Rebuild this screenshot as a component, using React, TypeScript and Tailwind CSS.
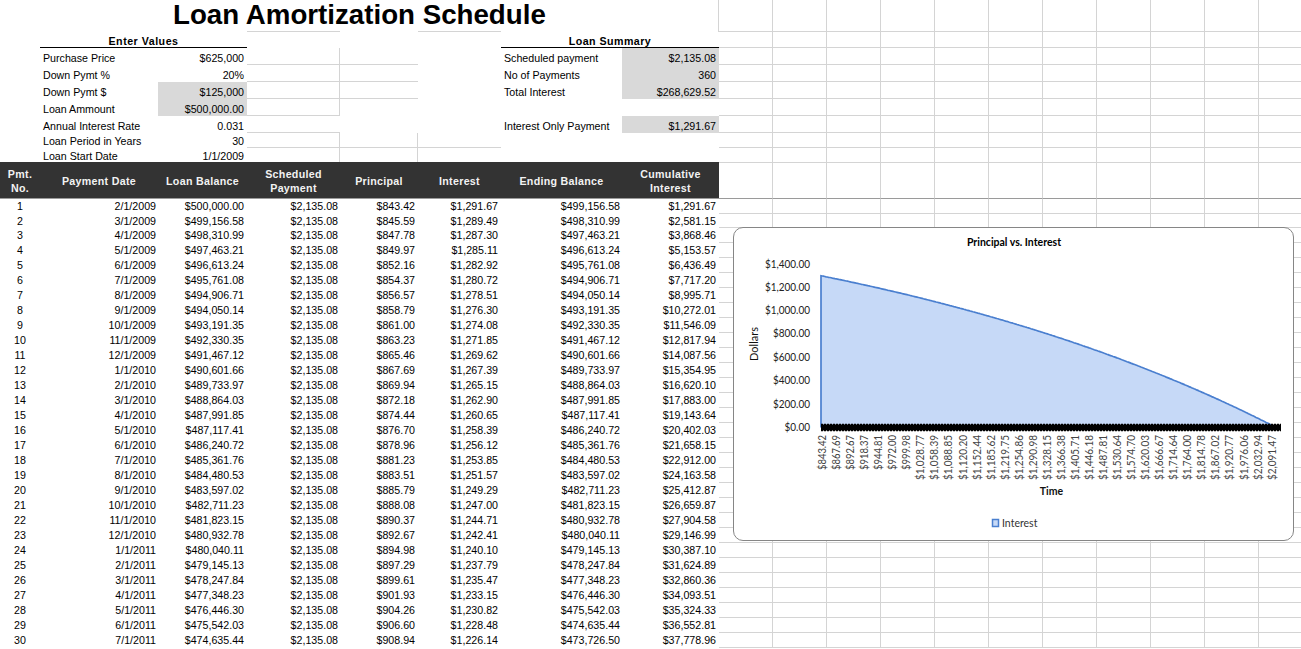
import type { ReactNode } from 'react'

const ROWS = [
  ['1', '2/1/2009', '$500,000.00', '$843.42', '$1,291.67', '$499,156.58', '$1,291.67'],
  ['2', '3/1/2009', '$499,156.58', '$845.59', '$1,289.49', '$498,310.99', '$2,581.15'],
  ['3', '4/1/2009', '$498,310.99', '$847.78', '$1,287.30', '$497,463.21', '$3,868.46'],
  ['4', '5/1/2009', '$497,463.21', '$849.97', '$1,285.11', '$496,613.24', '$5,153.57'],
  ['5', '6/1/2009', '$496,613.24', '$852.16', '$1,282.92', '$495,761.08', '$6,436.49'],
  ['6', '7/1/2009', '$495,761.08', '$854.37', '$1,280.72', '$494,906.71', '$7,717.20'],
  ['7', '8/1/2009', '$494,906.71', '$856.57', '$1,278.51', '$494,050.14', '$8,995.71'],
  ['8', '9/1/2009', '$494,050.14', '$858.79', '$1,276.30', '$493,191.35', '$10,272.01'],
  ['9', '10/1/2009', '$493,191.35', '$861.00', '$1,274.08', '$492,330.35', '$11,546.09'],
  ['10', '11/1/2009', '$492,330.35', '$863.23', '$1,271.85', '$491,467.12', '$12,817.94'],
  ['11', '12/1/2009', '$491,467.12', '$865.46', '$1,269.62', '$490,601.66', '$14,087.56'],
  ['12', '1/1/2010', '$490,601.66', '$867.69', '$1,267.39', '$489,733.97', '$15,354.95'],
  ['13', '2/1/2010', '$489,733.97', '$869.94', '$1,265.15', '$488,864.03', '$16,620.10'],
  ['14', '3/1/2010', '$488,864.03', '$872.18', '$1,262.90', '$487,991.85', '$17,883.00'],
  ['15', '4/1/2010', '$487,991.85', '$874.44', '$1,260.65', '$487,117.41', '$19,143.64'],
  ['16', '5/1/2010', '$487,117.41', '$876.70', '$1,258.39', '$486,240.72', '$20,402.03'],
  ['17', '6/1/2010', '$486,240.72', '$878.96', '$1,256.12', '$485,361.76', '$21,658.15'],
  ['18', '7/1/2010', '$485,361.76', '$881.23', '$1,253.85', '$484,480.53', '$22,912.00'],
  ['19', '8/1/2010', '$484,480.53', '$883.51', '$1,251.57', '$483,597.02', '$24,163.58'],
  ['20', '9/1/2010', '$483,597.02', '$885.79', '$1,249.29', '$482,711.23', '$25,412.87'],
  ['21', '10/1/2010', '$482,711.23', '$888.08', '$1,247.00', '$481,823.15', '$26,659.87'],
  ['22', '11/1/2010', '$481,823.15', '$890.37', '$1,244.71', '$480,932.78', '$27,904.58'],
  ['23', '12/1/2010', '$480,932.78', '$892.67', '$1,242.41', '$480,040.11', '$29,146.99'],
  ['24', '1/1/2011', '$480,040.11', '$894.98', '$1,240.10', '$479,145.13', '$30,387.10'],
  ['25', '2/1/2011', '$479,145.13', '$897.29', '$1,237.79', '$478,247.84', '$31,624.89'],
  ['26', '3/1/2011', '$478,247.84', '$899.61', '$1,235.47', '$477,348.23', '$32,860.36'],
  ['27', '4/1/2011', '$477,348.23', '$901.93', '$1,233.15', '$476,446.30', '$34,093.51'],
  ['28', '5/1/2011', '$476,446.30', '$904.26', '$1,230.82', '$475,542.03', '$35,324.33'],
  ['29', '6/1/2011', '$475,542.03', '$906.60', '$1,228.48', '$474,635.44', '$36,552.81'],
  ['30', '7/1/2011', '$474,635.44', '$908.94', '$1,226.14', '$473,726.50', '$37,778.96'],
]

const X_LABELS = [
  '$843.42', '$867.69', '$892.67', '$918.37', '$944.81', '$972.00', '$999.98', '$1,028.77', '$1,058.39',
  '$1,088.85', '$1,120.20', '$1,152.44', '$1,185.62', '$1,219.75', '$1,254.86', '$1,290.98', '$1,328.15',
  '$1,366.38', '$1,405.71', '$1,446.18', '$1,487.81', '$1,530.64', '$1,574.70', '$1,620.03', '$1,666.67',
  '$1,714.64', '$1,764.00', '$1,814.78', '$1,867.02', '$1,920.77', '$1,976.06', '$2,032.94', '$2,091.47',
]

const Y_LABELS = [
  ['$1,400.00', 263.5, 45],
  ['$1,200.00', 286.5, 45],
  ['$1,000.00', 310, 45],
  ['$800.00', 333, 37],
  ['$600.00', 357, 37],
  ['$400.00', 380, 37],
  ['$200.00', 404, 37],
  ['$0.00', 427, 25.5],
] as const

const COLS = 'grid grid-cols-[40px_118px_89px_93px_78px_83px_121px_97px] w-[719px] shrink-0'
const LINE = 'border-[#d4d4d4]'

// Empty worksheet cells to the right of the schedule
function Filler({ edges = 'border-b border-[#d4d4d4]' }: { edges?: string }) {
  return (
    <div className="flex h-full">
      {Array.from({ length: 11 }).map((_, i) => (
        <div key={i} className={`h-full w-[54px] shrink-0 border-r border-r-[#d4d4d4] ${edges}`} />
      ))}
    </div>
  )
}

function Row({ height, edges, children }: { height: string; edges?: string; children: ReactNode }) {
  return (
    <div className={`flex ${height}`}>
      <div className={`${COLS} h-full`}>{children}</div>
      <Filler edges={edges} />
    </div>
  )
}

// Label and value pair from the "Enter Values" block
function Field({ label, value, grey, tight }: { label: string; value: string; grey?: boolean; tight?: boolean }) {
  const bottom = tight ? '' : 'pb-[1px]'
  return (
    <>
      <div className={`col-start-2 flex items-end pl-[3px] ${bottom}`}>{label}</div>
      <div className={`flex items-end justify-end pr-[3px] ${bottom} ${grey ? 'bg-[#d9d9d9]' : ''}`}>{value}</div>
    </>
  )
}

function Summary({ label, value }: { label: string; value: string }) {
  return (
    <>
      <div className="col-start-7 flex items-end pb-[1px] pl-[3px]">{label}</div>
      <div className="col-start-8 flex items-end justify-end bg-[#d9d9d9] pb-[1px] pr-[3px]">{value}</div>
    </>
  )
}

function HeaderCell({ children }: { children: ReactNode }) {
  return <div className="flex items-center justify-center pt-[2px] text-center leading-[14px] tracking-[0.3px]">{children}</div>
}

function Chart() {
  const points: string[] = []
  let balance = 500000
  for (let i = 0; i < 360; i++) {
    const interest = (balance * 0.031) / 12
    balance -= 2135.08 - interest
    points.push(`${(821 + (i * 454) / 359).toFixed(1)},${(427.5 - interest * 0.1175).toFixed(1)}`)
  }

  return (
    <div className="absolute left-[733px] top-[227px] h-[314px] w-[561px] overflow-hidden rounded-[10px] border border-[#868686] bg-white">
      <svg className="block h-full w-full font-['Lato',sans-serif]" viewBox="734 228 559 312">
        <text x="1014" y="246" textAnchor="middle" fontSize="10.5" fontWeight="700" fill="#000">
          Principal vs. Interest
        </text>
        <path d={`M821,427.5 L${points.join(' L')} L1275,427.5 Z`} fill="#c6d9f7" stroke="none" />
        <polyline points={`821,427.5 ${points.join(' ')}`} fill="none" stroke="#4a7fcf" strokeWidth="1.7" />
        {Y_LABELS.map(([label, y, width]) => (
          <text
            key={label}
            x={810 - width}
            y={y + 4}
            textLength={width}
            lengthAdjust="spacingAndGlyphs"
            fontSize="11"
            fill="#222"
          >
            {label}
          </text>
        ))}
        <text transform="translate(758 344) rotate(-90)" textAnchor="middle" fontSize="11" fill="#111">
          Dollars
        </text>
        <rect x="821" y="424.5" width="460" height="6" fill="#000" />
        <line x1="821" y1="427.5" x2="1281" y2="427.5" stroke="#000" strokeWidth="7.5" strokeDasharray="2 1" />
        {X_LABELS.map((label, i) => (
          <text
            key={label}
            transform={`translate(${826 + i * 14.05} ${435 + label.length * 5}) rotate(-90)`}
            textLength={label.length * 5}
            lengthAdjust="spacingAndGlyphs"
            fontSize="11"
            fill="#444"
          >
            {label}
          </text>
        ))}
        <text x="1051.5" y="495" textAnchor="middle" fontSize="10.5" fontWeight="700" fill="#111">
          Time
        </text>
        <rect x="992.5" y="519.5" width="6" height="7" fill="#c6d9f7" stroke="#4a7fcf" strokeWidth="1.5" />
        <text x="1002" y="527" fontSize="10.5" fill="#333">
          Interest
        </text>
      </svg>
    </div>
  )
}

export default function App() {
  return (
    <div className="relative h-[649px] w-[1301px] overflow-hidden bg-white font-['Liberation_Sans',Arial,sans-serif] text-[10.67px] leading-none text-black">
      {/* Title row */}
      <Row height="h-[32px]">
        <div className="col-start-4 row-start-1 border-b border-[#d4d4d4]" />
        <div className="col-start-6 row-start-1 border-b border-[#d4d4d4]" />
        <div className="col-start-8 row-start-1 border-r border-[#d4d4d4]" />
        <div className="col-span-8 col-start-1 row-start-1 pl-[173px] pt-[1px] text-[27.7px] leading-[28px] font-bold whitespace-nowrap">
          Loan Amortization Schedule
        </div>
      </Row>

      {/* Enter Values / Loan Summary */}
      <Row height="h-[16px]">
        <div className="col-span-2 col-start-2 flex items-end justify-center border-b border-black font-bold tracking-[0.5px]">
          Enter Values
        </div>
        <div className="col-span-2 col-start-7 flex items-end justify-center border-b border-black font-bold tracking-[0.45px]">
          Loan Summary
        </div>
      </Row>
      <Row height="h-[17px]">
        <Field label="Purchase Price" value="$625,000" />
        <div className={`border-r border-b ${LINE}`} />
        <div className={`border-b ${LINE}`} />
        <Summary label="Scheduled payment" value="$2,135.08" />
      </Row>
      <Row height="h-[17px]">
        <Field label="Down Pymt %" value="20%" />
        <div className={`border-r border-b ${LINE}`} />
        <div className={`border-b ${LINE}`} />
        <Summary label="No of Payments" value="360" />
      </Row>
      <Row height="h-[17px]">
        <Field label="Down Pymt $" value="$125,000" grey />
        <div className={`border-r border-b ${LINE}`} />
        <div className={`border-b ${LINE}`} />
        <Summary label="Total Interest" value="$268,629.52" />
      </Row>
      <Row height="h-[17px]">
        <Field label="Loan Ammount" value="$500,000.00" grey />
        <div className={`border-r border-b ${LINE}`} />
      </Row>
      <Row height="h-[17px]">
        <Field label="Annual Interest Rate" value="0.031" />
        <div className={`border-b ${LINE}`} />
        <Summary label="Interest Only Payment" value="$1,291.67" />
      </Row>
      <Row height="h-[15px]">
        <Field label="Loan Period in Years" value="30" />
        <div className={`border-r border-b ${LINE}`} />
        <div className={`border-r border-b ${LINE}`} />
        <div className={`border-b ${LINE}`} />
      </Row>
      <Row height="h-[14px]" edges="border-b-0">
        <Field label="Loan Start Date" value="1/1/2009" tight />
        <div className={`border-r ${LINE}`} />
        <div className={`border-r ${LINE}`} />
      </Row>

      {/* Schedule header */}
      <Row height="h-[37px]" edges="border-t border-t-[#d4d4d4] border-b border-b-[#9a9a9a]">
        <div className="col-span-8 grid grid-cols-subgrid border-b border-[#9a9a9a] bg-[#333333] font-bold text-[#f2f2f2]">
          <HeaderCell>Pmt.<br />No.</HeaderCell>
          <HeaderCell>Payment Date</HeaderCell>
          <HeaderCell>Loan Balance</HeaderCell>
          <HeaderCell>Scheduled<br />Payment</HeaderCell>
          <HeaderCell>Principal</HeaderCell>
          <HeaderCell>Interest</HeaderCell>
          <HeaderCell>Ending Balance</HeaderCell>
          <HeaderCell>Cumulative<br />Interest</HeaderCell>
        </div>
      </Row>

      {/* Schedule rows */}
      {ROWS.map(row => (
        <Row key={row[0]} height={row[0] === '2' ? 'h-[14px]' : 'h-[15px]'}>
          <div className="flex items-center justify-center">{row[0]}</div>
          <div className="flex items-center justify-end pr-[2px]">{row[1]}</div>
          <div className="flex items-center justify-end pr-[3px]">{row[2]}</div>
          <div className="flex items-center justify-end pr-[2px]">$2,135.08</div>
          <div className="flex items-center justify-end pr-[3px]">{row[3]}</div>
          <div className="flex items-center justify-end pr-[3px]">{row[4]}</div>
          <div className="flex items-center justify-end pr-[2px]">{row[5]}</div>
          <div className="flex items-center justify-end pr-[3px]">{row[6]}</div>
        </Row>
      ))}

      <Chart />
    </div>
  )
}
